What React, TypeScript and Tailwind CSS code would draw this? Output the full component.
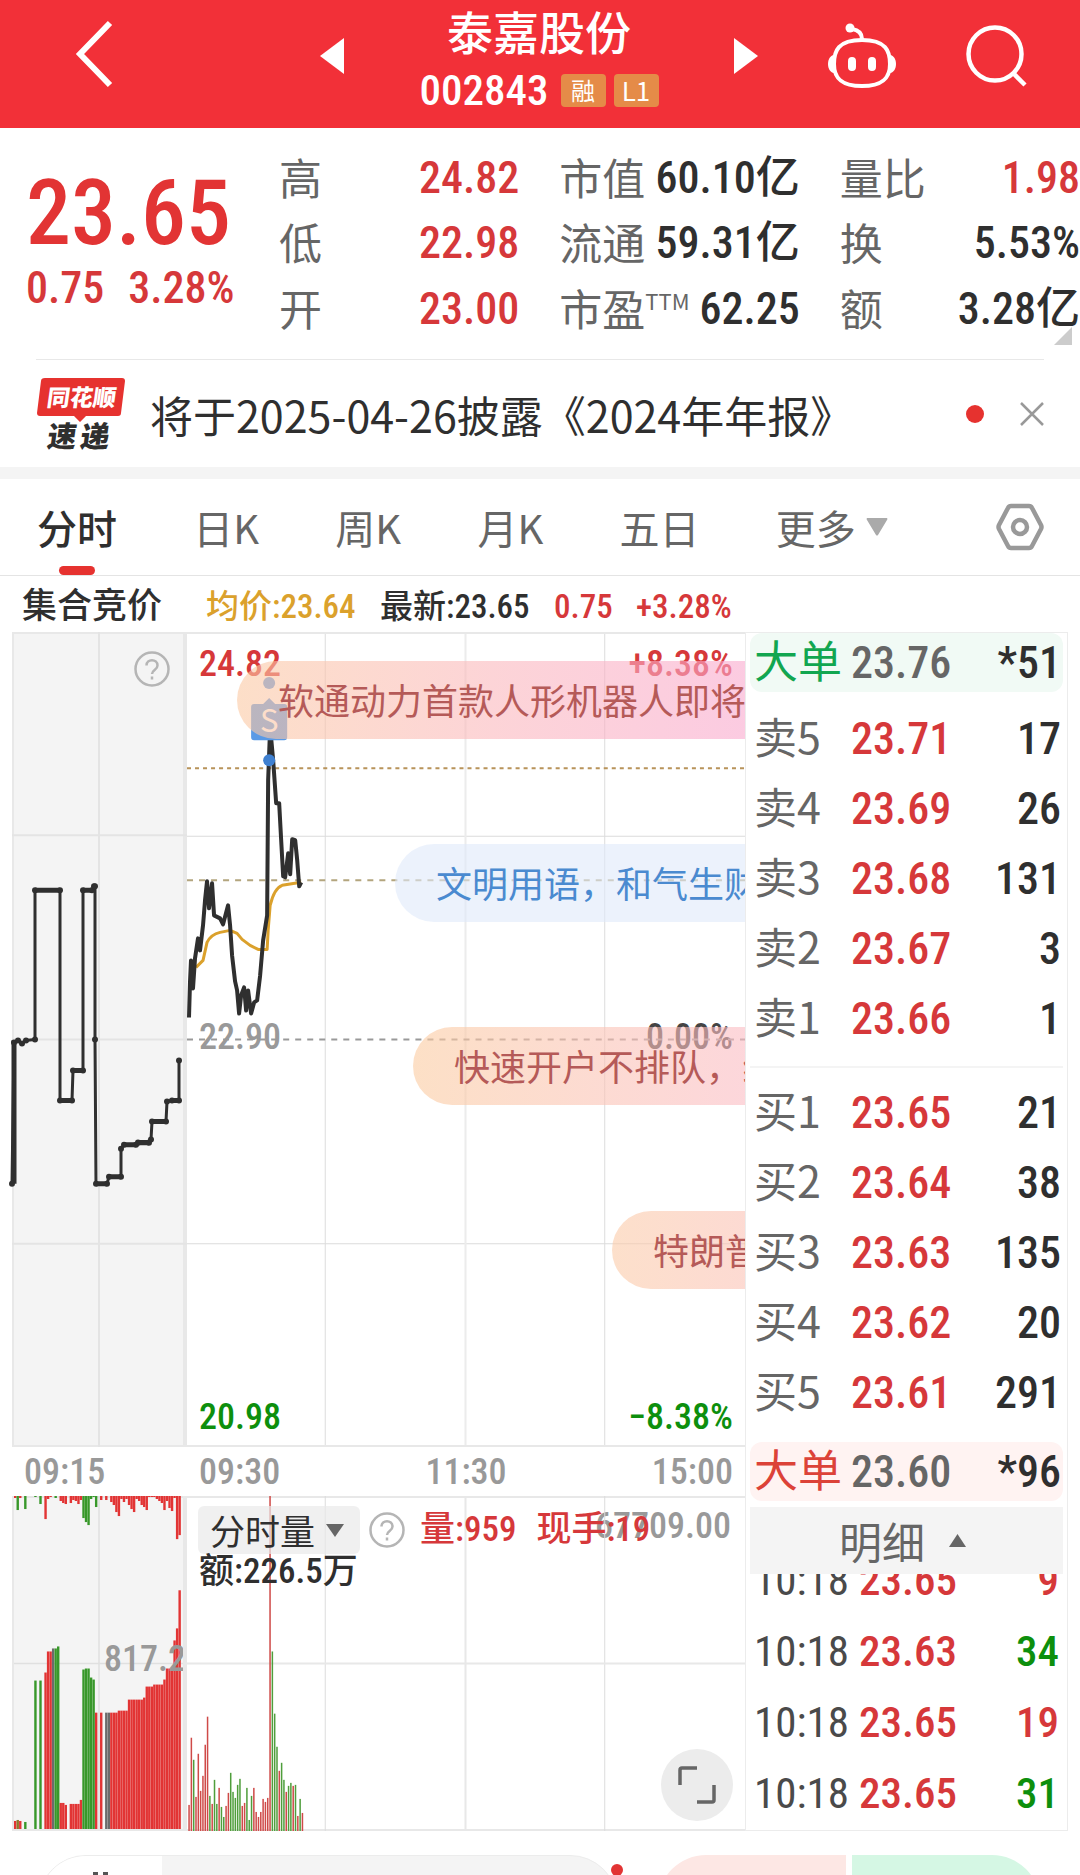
import type { ReactNode } from "react";

const NUM = "font-[family-name:'Roboto_Condensed','Noto_Sans_CJK_SC','Noto_Sans',sans-serif] font-medium";

const stats = [
  ["高", "24.82", "text-[#d6383a]"],
  ["市值", "60.10亿", "text-[#2f2f2f]"],
  ["量比", "1.98", "text-[#d6383a]"],
  ["低", "22.98", "text-[#d6383a]"],
  ["流通", "59.31亿", "text-[#2f2f2f]"],
  ["换", "5.53%", "text-[#2f2f2f]"],
  ["开", "23.00", "text-[#d6383a]"],
  ["市盈", "62.25", "text-[#2f2f2f]"],
  ["额", "3.28亿", "text-[#2f2f2f]"],
];

const asks = [
  ["卖5", "23.71", "17"],
  ["卖4", "23.69", "26"],
  ["卖3", "23.68", "131"],
  ["卖2", "23.67", "3"],
  ["卖1", "23.66", "1"],
];

const bids = [
  ["买1", "23.65", "21"],
  ["买2", "23.64", "38"],
  ["买3", "23.63", "135"],
  ["买4", "23.62", "20"],
  ["买5", "23.61", "291"],
];

const trades = [
  ["10:18", "23.65", "9", "text-[#d6383a]"],
  ["10:18", "23.63", "34", "text-[#0d8f0d]"],
  ["10:18", "23.65", "19", "text-[#d6383a]"],
  ["10:18", "23.65", "31", "text-[#0d8f0d]"],
];

const RED = "#e23434";
const GREEN = "#38982a";
const GRAY = "#6b6b6b";

// [first slot, slots, height, colour]
const auctionBars: [number, number, number, string][] = [
  [0, 1, 10, RED], [1, 1, 11, "#8a7a2a"], [2, 1, 10, RED], [4, 1, 9, GREEN],
  [8, 1, 150, GREEN], [10, 1, 150, GREEN], [12, 1, 158, RED], [13, 2, 179, RED],
  [15, 1, 182, GRAY], [16, 1, 182, GREEN], [17, 1, 184, GREEN], [18, 2, 28, RED],
  [20, 1, 26, RED], [22, 4, 27, RED], [26, 1, 31, RED], [27, 1, 161, GREEN],
  [28, 2, 162, GREEN], [30, 1, 153, GREEN], [31, 1, 151, GREEN], [32, 1, 118, RED],
  [34, 1, 118, RED], [36, 2, 118, GRAY], [38, 3, 118, RED], [41, 4, 120, RED],
  [45, 6, 131, RED], [51, 1, 133, RED], [52, 3, 144, RED], [55, 4, 146, RED],
  [59, 1, 151, RED], [60, 3, 162, RED], [63, 1, 190, RED], [64, 1, 202, RED],
  [65, 1, 240, RED],
];

// unmatched volume, hangs from the top edge; negative is green
const unmatched = [
  2, -14, 2, 0, -13, 0, 0, 0, -1, 0, -8, 0, 23, 3, 1, 0, -2, 0, 5, 7, 8, 0, 7, 4, 5, 8, 4,
  -22, -26, -29, -3, -1, -11, 0, 4, 0, 4, 0, 6, 9, 16, 20, 3, 6, 3, 9, 13, 16, 3, 5, 9, 11,
  14, 1, 1, 1, 3, 5, 7, 14, 5, 12, 15, 2, 43, 39,
];

// minute volume; negative is a falling minute
const minuteVolume = [
  26, 93, -71, 34, 77, 40, 55, 86, 114, -35, 27, -51, -27, 43, -24, -14, 25, 38, -58, -39,
  -33, -46, -52, 25, 28, -43, -11, -35, 43, 19, 14, 19, 32, 29, 33, 334, -179, -117, -84,
  60, -68, -51, 39, -45, -48, 45, -46, 15, -32, 18,
];

const auctionSteps: [number, number][] = [
  [0, 551], [2, 410], [6, 408], [10, 411], [14, 408], [23, 407], [23, 258], [48, 258],
  [48, 468], [60, 468], [61, 438], [71, 438], [71, 258], [80, 258], [82, 254], [83, 254],
  [83, 407], [84, 551], [95, 551], [97, 544], [109, 544], [109, 516], [112, 512], [124, 512],
  [126, 510], [137, 510], [139, 507], [140, 489], [154, 489], [155, 469], [160, 468],
  [167, 468], [167, 428],
];

const priceLine =
  "2,385 3,350 4,328 6,356 8,326 11,306 13,318 16,293 18,268 20,249 22,276 25,251 27,283 33,286 36,292 41,273 43,293 45,323 48,349 50,358 52,381 54,363 57,355 59,378 61,358 64,381 67,370 70,368 73,343 76,308 80,283 81,148 83,95 86,128 89,171 92,171 94,208 96,244 98,245 101,221 103,242 105,207 108,208 110,228 112,254 114,250";

function HelpIcon() {
  return (
    <svg viewBox="0 0 38 38" className="size-[38px]" fill="none" stroke="#b5b5b5" strokeWidth="2.5">
      <circle cx="19" cy="19" r="16.5" />
      <path d="M13.5 15.5c0-7 11-7 11 0 0 4.500-5.500 4.500-5.500 8.500" />
      <path d="M19 26.500v3" />
    </svg>
  );
}

function Bullet({ className, children }: { className: string; children: ReactNode }) {
  return (
    <div className={`absolute h-[78px] rounded-l-full pl-[41px] text-[36px] leading-[76px] whitespace-nowrap ${className}`}>
      {children}
    </div>
  );
}

function BookTable({ rows, label }: { rows: string[][]; label: string }) {
  return (
    <table aria-label={label} className="w-full table-fixed">
      <tbody>
        {rows.map(([name, price, qty]) => (
          <tr key={name} className="h-[70px] leading-[50px]">
            <td className="w-[101px] p-0 pb-1 pl-1 text-[43px] text-[#666]">{name}</td>
            <td className={`${NUM} p-0 pt-1 text-[44px] text-[#d6383a]`}>{price}</td>
            <td className={`${NUM} w-20 p-0 pt-1 pr-0.5 text-right text-[44px] text-[#2f2f2f]`}>{qty}</td>
          </tr>
        ))}
      </tbody>
    </table>
  );
}

function BigOrder({ className, labelClass, price, qty }: { className: string; labelClass: string; price: string; qty: string }) {
  return (
    <div className={`flex h-[59px] items-center rounded-xl pr-0.5 pl-1 leading-[50px] ${className}`}>
      <span className={`w-[97px] shrink-0 pb-2 text-[44px] ${labelClass}`}>大单</span>
      <span className={`${NUM} text-[44px] text-[#666]`}>{price}</span>
      <span className={`${NUM} ml-auto text-[44px] text-[#2f2f2f]`}>*{qty}</span>
    </div>
  );
}

function Header() {
  return (
    <header className="flex h-32 shrink-0 items-center justify-between bg-[#f23038] pr-[52px] pl-[72px] text-white">
      <button aria-label="返回" className="pb-5">
        <svg viewBox="0 0 44 68" className="h-[68px] w-11" fill="none" stroke="currentColor" strokeWidth="6">
          <path d="M38 3 8 34l30 31" />
        </svg>
      </button>
      <div className="ml-[136px] flex items-center">
        <button aria-label="上一只" className="pb-4">
          <svg viewBox="0 0 24 36" className="h-9 w-6" fill="currentColor">
            <path d="M24 0v36L0 18z" />
          </svg>
        </button>
        <div className="flex w-[390px] flex-col items-center pb-2">
          <h1 className="text-[46px] leading-[60px] font-medium">泰嘉股份</h1>
          <div className="flex items-center gap-2">
            <span className={`${NUM} mr-1 text-[43px] leading-[60px]`}>002843</span>
            <span className="h-[33px] w-[45px] rounded-sm bg-[#e58b48] text-center text-[24px] leading-[32px]">融</span>
            <span className="h-[33px] w-[45px] rounded-sm bg-[#e58b48] text-center text-[26px] leading-[32px]">L1</span>
          </div>
        </div>
        <button aria-label="下一只" className="pb-4">
          <svg viewBox="0 0 24 36" className="h-9 w-6" fill="currentColor">
            <path d="M0 0v36l24-18z" />
          </svg>
        </button>
      </div>
      <div className="flex items-center gap-[68px] pb-4">
        <button aria-label="智能助手">
          <svg viewBox="0 0 72 66" className="h-[66px] w-[72px]" fill="none" stroke="currentColor" strokeWidth="4">
            <path d="M36 17C12 17 8 28 8 41s6 22 28 22 28-9 28-22-4-24-28-24Z" />
            <path d="M36 16c0-6-4-9-10-10" />
            <circle cx="24" cy="5" r="4.500" fill="currentColor" stroke="none" />
            <path d="M8 32c-8 1-8 17 0 18zM64 32c8 1 8 17 0 18z" fill="currentColor" stroke="none" />
            <path d="M26 38v6M46 38v6" strokeWidth="8" strokeLinecap="round" />
          </svg>
        </button>
        <button aria-label="搜索">
          <svg viewBox="0 0 62 62" className="size-[62px]" fill="none" stroke="currentColor" strokeWidth="4.500">
            <circle cx="29" cy="29" r="26.500" />
            <path d="M47 48l12 12" />
          </svg>
        </button>
      </div>
    </header>
  );
}

function Quote() {
  return (
    <section className="relative flex h-[231px] shrink-0 pt-[17px] pl-[26px]">
      <div className="w-[253px] shrink-0 text-[#e23434]">
        <div className={`${NUM} pt-5 text-[90px] leading-[98px]`}>23.65</div>
        <div className={`${NUM} flex gap-6 text-[44px] leading-[50px] text-[#d6383a]`}>
          <span>0.75</span>
          <span>3.28%</span>
        </div>
      </div>
      <dl className="grid h-[197px] flex-1 grid-cols-3 gap-x-10">
        {stats.map(([name, value, color]) => (
          <div key={name} className="flex items-center justify-between whitespace-nowrap">
            <dt className="pb-1 text-[43px] leading-[60px] text-[#666]">
              {name}
              {name === "市盈" && <sup className="-top-4 text-[22px] leading-none">TTM</sup>}
            </dt>
            <dd className={`${NUM} text-[44px] leading-[60px] ${color}`}>{value}</dd>
          </div>
        ))}
      </dl>
      <svg viewBox="0 0 18 18" className="absolute right-2 bottom-3.5 size-[18px]" fill="#ccc">
        <path d="M18 0v18H0z" />
      </svg>
    </section>
  );
}

function News() {
  return (
    <section className="mx-9 flex h-[108px] shrink-0 items-center border-t border-[#e8e8e8]">
      <svg viewBox="0 0 90 74" className="h-[74px] w-[90px] shrink-0" role="img" aria-label="同花顺速递">
        <path d="M9 1h77q3 0 3 3l-4 32q0 3-3 3H50l-6 6-6-6H4q-3 0-3-3L5 4q0-3 4-3Z" fill="#e6322f" />
        <g transform="skewX(-8)" fontFamily="'Noto Sans CJK SC', sans-serif" fontWeight="900">
          <text x="14" y="29" fontSize="23" fill="#fff">同花顺</text>
          <text x="20" y="70" fontSize="29" fill="#2f2f2f">速</text>
          <text x="53" y="70" fontSize="29" fill="#2f2f2f">递</text>
        </g>
      </svg>
      <a href="#report" className="ml-6 text-[43px] leading-[60px] whitespace-nowrap text-[#2f2f2f]">
        将于2025-04-26披露《2024年年报》
      </a>
      <span className="ml-auto size-[18px] rounded-full bg-[#e6322f]" />
      <button aria-label="关闭" className="ml-9">
        <svg viewBox="0 0 24 24" className="size-6" stroke="#999" strokeWidth="2.500">
          <path d="M1 1l22 22M23 1 1 23" />
        </svg>
      </button>
    </section>
  );
}

function Tabs() {
  return (
    <nav className="flex h-[97px] shrink-0 items-center justify-between border-b border-[#e4e4e4] pr-9 pl-[37px] text-[40px] text-[#666]">
      <button className="relative h-full font-medium text-[#2f2f2f]">
        分时
        <span className="absolute bottom-0 left-1/2 h-[9px] w-9 -translate-x-1/2 rounded-full bg-[#e6322f]" />
      </button>
      <button>日K</button>
      <button>周K</button>
      <button>月K</button>
      <button>五日</button>
      <button className="flex items-center gap-2.5">
        更多
        <svg viewBox="0 0 22 18" className="h-[18px] w-[22px]" fill="#aaa">
          <path d="M1 0h20q1 1 0 2L12 17q-1 1-2 0L1 2Q0 1 1 0" />
        </svg>
      </button>
      <button aria-label="设置" className="ml-8">
        <svg viewBox="0 0 48 48" className="size-12" fill="none" stroke="#999" strokeWidth="4.500" strokeLinejoin="round">
          <path d="M15 3h18q2 0 3 2l9 17q1 2 0 4l-9 17q-1 2-3 2H15q-2 0-3-2L3 26q-1-2 0-4L12 5q1-2 3-2Z" />
          <circle cx="24" cy="24" r="7" />
        </svg>
      </button>
    </nav>
  );
}

function AuctionChart() {
  return (
    <div className="relative w-[175px] shrink-0 border-2 border-r-4 border-[#e8e8e8] bg-[#f4f4f4]">
      <svg viewBox="0 0 175 814" preserveAspectRatio="none" className="absolute -inset-0.5 h-[815px] w-[175px] overflow-visible" fill="none">
        <path d="M87 0v814M0 203h175M0 407h175M0 611h175" stroke="#e4e4e4" strokeWidth="2" />
        <path d="M2 408v143" stroke="#2f2f2f" strokeWidth="5" />
        <polyline points={auctionSteps.map((p) => p.join(",")).join(" ")} stroke="#2f2f2f" strokeWidth="3" />
        {auctionSteps.map(([x, y], i) => (
          <circle key={i} cx={x} cy={y} r="3" fill="#2f2f2f" />
        ))}
        <path
          d="M23 258h25M48 468h12M61 438h10M71 258h9M84 551h11M97 544h12M112 512h12M126 510h11M140 489h14M160 468h7"
          stroke="#2f2f2f"
          strokeWidth="5"
        />
      </svg>
      <button aria-label="竞价说明" className="absolute top-4 right-3">
        <HelpIcon />
      </button>
    </div>
  );
}

function PriceChart() {
  return (
    <div className="relative flex-1 overflow-hidden border-y-2 border-[#e8e8e8]">
      <div className={`${NUM} text-[36px] leading-10`}>
        <span className="absolute top-2.5 left-3 text-[#d6383a]">24.82</span>
        <span className="absolute top-2.5 right-3 text-[#d6383a]">+8.38%</span>
        <span className="absolute top-[383px] left-3 text-[#999]">22.90</span>
        <span className="absolute top-[383px] right-3 text-[#444]">0.00%</span>
        <span className="absolute bottom-2 left-3 text-[#0d8f0d]">20.98</span>
        <span className="absolute right-3 bottom-2 text-[#0d8f0d]">−8.38%</span>
      </div>
      <svg viewBox="0 0 557 814" preserveAspectRatio="none" className="absolute inset-x-0 -top-0.5 h-[815px] w-full" fill="none">
        <path d="M138 0v814M417 0v814M0 204h557M0 611h557" stroke="#dcdcdc" />
        <path d="M278 0v814" stroke="#ececec" strokeWidth="2" />
        <path d="M0 136h557" stroke="#b8935a" strokeWidth="2" strokeDasharray="4 4" />
        <path d="M0 248h557" stroke="#b3a57e" strokeWidth="2" strokeDasharray="6 6" />
        <path d="M0 407h557" stroke="#999" strokeWidth="2" strokeDasharray="6 6" />
        <path
          d="M9 335 16 328 20 310Q24 302 33 300L43 298 50 301 55 307 63 313 71 317H80L81 298 83 273Q87 256 95 253L114 250"
          stroke="#dba12c"
          strokeWidth="3"
          strokeLinejoin="round"
        />
        <polyline points={priceLine} stroke="#2f2f2f" strokeWidth="4" strokeLinejoin="round" />
        <g fill="#5a9ae6">
          <circle cx="82" cy="51" r="6" />
          <path d="M67 72h9l6-6 6 6h9q3 0 3 3v30q0 3-3 3H67q-3 0-3-3V75q0-3 3-3Z" />
          <circle cx="82" cy="128" r="6" fill="#3f80d0" />
        </g>
        <text x="82" y="100" textAnchor="middle" fontSize="31" fontFamily="'Noto Sans CJK SC', sans-serif" fill="#fff">S</text>
      </svg>
      <Bullet className="top-[27px] left-[50px] bg-linear-to-r from-[#fbc9a3]/60 via-[#fbb6be]/60 to-[#f9a6d0]/60 pr-10 text-[#b55a58]">
        软通动力首款人形机器人即将
      </Bullet>
      <Bullet className="top-[210px] left-[208px] bg-[#dfeafa]/60 pr-10 text-[#4a8ad0]">文明用语，和气生财</Bullet>
      <Bullet className="top-[393px] left-[226px] bg-linear-to-r from-[#fbcba0]/60 to-[#fbb9c8]/60 pr-5 text-[#b55a58]">
        快速开户不排队，线
      </Bullet>
      <Bullet className="top-[577px] left-[425px] bg-linear-to-r from-[#fbcba8]/60 to-[#fbbfb8]/60 pr-5 text-[#b55a58]">特朗普</Bullet>
    </div>
  );
}

function AuctionVolume() {
  return (
    <div className="relative w-[175px] shrink-0 overflow-hidden border-x-2 border-r-4 border-b-2 border-[#e8e8e8] bg-[#f4f4f4]">
      <svg viewBox="0 0 175 334" preserveAspectRatio="none" className="absolute top-0 -left-0.5 h-[335px] w-[175px]">
        <path d="M87 0v334M0 167h175M0 1h175" stroke="#e0e0e0" strokeWidth="1.500" />
        {auctionBars.flatMap(([start, count, h, fill]) =>
          Array.from({ length: count }, (_, k) => (
            <rect key={start + k} x={2 + (start + k) * 2.53} y={334 - h} width="2.400" height={h} fill={fill} />
          ))
        )}
        {unmatched.map((v, i) => (
          <rect key={i} x={2 + i * 2.53} y="0" width="2.400" height={Math.abs(v)} fill={v < 0 ? GREEN : RED} />
        ))}
      </svg>
      <span className={`${NUM} absolute top-[143px] left-[90px] text-[36px] leading-10 text-[#999]`}>817.2</span>
    </div>
  );
}

function MinuteVolume() {
  return (
    <div className="relative flex-1 border-y-2 border-[#e8e8e8]">
      <span className={`${NUM} absolute top-2 right-3.5 text-[36px] leading-10 text-[#999]`}>67709.00</span>
      <svg viewBox="0 0 557 334" preserveAspectRatio="none" className="absolute inset-x-0 -top-0.5 h-[335px] w-full">
        <path d="M138 0v334M417 0v334" stroke="#dcdcdc" />
        <path d="M278 0v334M0 167h557" stroke="#e8e8e8" strokeWidth="2" />
        {minuteVolume.map((v, i) => (
          <rect key={i} x={1.3 + i * 2.31} y={334 - Math.abs(v)} width="1.500" height={Math.abs(v)} fill={v < 0 ? "#4f9e3c" : "#cf4a48"} />
        ))}
      </svg>
      <div className="relative flex items-center gap-2 pt-2 pl-[11px]">
        <label className="relative flex items-center rounded-md bg-[#eaeaea]/70">
          <select aria-label="指标" className="h-12 w-[162px] appearance-none pl-3 text-[35px] leading-[48px] text-[#2f2f2f]">
            <option>分时量</option>
          </select>
          <svg viewBox="0 0 18 13" className="pointer-events-none absolute right-4 h-[13px] w-[18px]" fill="#666">
            <path d="M0 0h18L9 13z" />
          </svg>
        </label>
        <button aria-label="指标说明">
          <HelpIcon />
        </button>
        <div className={`${NUM} flex gap-5 pl-1.5 text-[35px] leading-10 whitespace-nowrap text-[#d6383a]`}>
          <span>量:959</span>
          <span>现手:19</span>
        </div>
      </div>
      <div className={`${NUM} relative pl-3 text-[35px] leading-9 text-[#2f2f2f]`}>额:226.5万</div>
      <button aria-label="全屏" className="absolute right-3 bottom-2 flex size-[72px] items-center justify-center rounded-full bg-[#ececec]">
        <svg viewBox="0 0 38 38" className="size-[38px]" fill="none" stroke="#666" strokeWidth="3.500">
          <path d="M2 19V4q0-2 2-2h15M36 19v15q0 2-2 2H19" />
        </svg>
      </button>
    </div>
  );
}

export default function App() {
  return (
    <div className="flex h-screen flex-col overflow-hidden bg-white font-[family-name:'Noto_Sans_CJK_SC',sans-serif]">
      <Header />
      <Quote />
      <News />
      <div className="h-3 shrink-0 bg-[#f4f4f4]" />
      <Tabs />

      {/* latest figures */}
      <div className={`${NUM} flex h-14 shrink-0 items-center pt-1.5 pl-[22px] text-[33px] whitespace-nowrap text-[#2f2f2f]`}>
        <span className="w-[184px] text-[35px]">集合竞价</span>
        <span className="w-[174px] text-[#dba12c]">均价:23.64</span>
        <span className="w-[174px]">最新:23.65</span>
        <span className="w-[82px] text-[#d6383a]">0.75</span>
        <span className="text-[#d6383a]">+3.28%</span>
      </div>

      <main className="flex shrink-0 px-3">
        <div className="min-w-0 flex-1">
          <div className="flex h-[815px]">
            <AuctionChart />
            <PriceChart />
          </div>
          <div className={`${NUM} flex h-[49px] items-center text-[36px] leading-10 text-[#999]`}>
            <span className="w-[175px] pl-3">09:15</span>
            <div className="grid flex-1 grid-cols-3 px-3">
              <span>09:30</span>
              <span className="text-center">11:30</span>
              <span className="text-right">15:00</span>
            </div>
          </div>
          <div className="flex h-[335px]">
            <AuctionVolume />
            <MinuteVolume />
          </div>
        </div>

        {/* order book and trade ticks */}
        <aside className="flex h-[1199px] w-[323px] shrink-0 flex-col border border-[#ececec] px-1">
          <BigOrder className="bg-[#f1faf5]" labelClass="text-[#12a650]" price="23.76" qty="51" />
          <div className="mt-2.5 mb-3.5">
            <BookTable rows={asks} label="卖盘" />
          </div>
          <div className="border-t-2 border-[#f4f4f4] pt-2">
            <BookTable rows={bids} label="买盘" />
          </div>
          <BigOrder className="mt-4 bg-[#fff3f2]" labelClass="text-[#dc4238]" price="23.60" qty="96" />
          <button className="mt-1.5 flex h-[67px] shrink-0 items-center justify-center gap-6 bg-[#f4f4f4] pr-2 text-[43px] text-[#666]">
            明细
            <svg viewBox="0 0 17 13" className="h-[13px] w-[17px]" fill="#666">
              <path d="M8.500 0 17 13H0z" />
            </svg>
          </button>
          <div className="min-h-0 flex-1 overflow-hidden">
            <table aria-label="成交明细" className={`${NUM} -mt-[30px] w-full table-fixed`}>
              <tbody>
                {trades.map(([time, price, qty, color], i) => (
                  <tr key={i} className="h-[71px] text-[43px] leading-[50px]">
                    <td className="w-[109px] p-0 pl-1 font-normal text-[#4a4a4a]">{time}</td>
                    <td className="p-0 text-[#d6383a]">{price}</td>
                    <td className={`w-20 p-0 pr-1 text-right ${color}`}>{qty}</td>
                  </tr>
                ))}
              </tbody>
            </table>
          </div>
        </aside>
      </main>

      {/* bottom bar */}
      <footer className="mt-6 flex shrink-0 gap-10 pr-10 pl-[38px]">
        <div className="relative flex h-24 w-[580px] rounded-full border border-[#ececec] bg-[#f4f4f4]">
          <button aria-label="行情" className="flex w-[123px] justify-center rounded-l-full bg-white pt-4">
            <svg viewBox="0 0 16 40" className="h-10 w-4" fill="#555">
              <path d="M0 0h5v40H0zM10 0h5v40h-5z" />
            </svg>
          </button>
          <span className="absolute top-2 -right-1.5 size-3 rounded-full bg-[#e23434]" />
        </div>
        <div className="flex h-24 flex-1 gap-1.5 overflow-hidden rounded-full">
          <button aria-label="买入" className="flex-1 bg-[#fde7e4]" />
          <button aria-label="卖出" className="flex-1 bg-[#d5f7e4]" />
        </div>
      </footer>
    </div>
  );
}
